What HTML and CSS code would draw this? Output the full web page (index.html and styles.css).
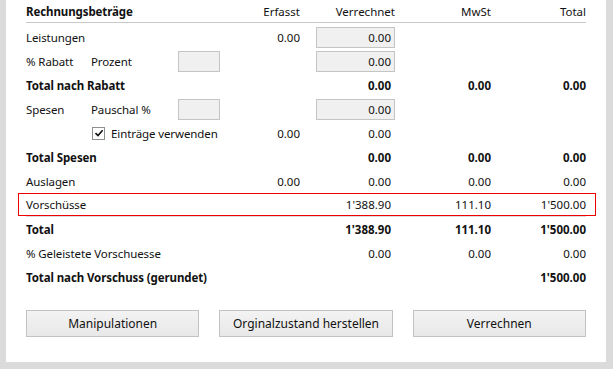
FILE: index.html
```html
<!DOCTYPE html>
<html lang="de">
<head>
  <meta charset="UTF-8">
  <title>Rechnungsbeträge</title>
  <link rel="stylesheet" href="styles.css">
</head>
<body>
  <div class="panel">
    <div class="row head">
      <span class="label bold">Rechnungsbeträge</span>
      <span class="num">Erfasst</span>
      <span class="num verr-head">Verrechnet</span>
      <span class="num">MwSt</span>
      <span class="num">Total</span>
    </div>

    <div class="row">
      <span class="label">Leistungen</span>
      <span class="num">0.00</span>
      <span class="cell-box"><span class="box">0.00</span></span>
      <span></span>
      <span></span>
    </div>

    <div class="row">
      <span class="label">
        <span class="sub1">% Rabatt</span>
        <span class="sub2">Prozent</span>
        <span class="small-box"></span>
      </span>
      <span></span>
      <span class="cell-box"><span class="box">0.00</span></span>
      <span></span>
      <span></span>
    </div>

    <div class="row bold">
      <span class="label">Total nach Rabatt</span>
      <span></span>
      <span class="num verr">0.00</span>
      <span class="num">0.00</span>
      <span class="num">0.00</span>
    </div>

    <div class="row">
      <span class="label">
        <span class="sub1">Spesen</span>
        <span class="sub2">Pauschal %</span>
        <span class="small-box"></span>
      </span>
      <span></span>
      <span class="cell-box"><span class="box">0.00</span></span>
      <span></span>
      <span></span>
    </div>

    <div class="row">
      <span class="label check-label">
        <span class="checkbox">
          <svg width="10" height="10" viewBox="0 0 10 10"><path d="M1.5 5.2 L4 7.6 L8.6 2.2" fill="none" stroke="#111" stroke-width="1.6"/></svg>
        </span>
        Einträge verwenden
      </span>
      <span class="num">0.00</span>
      <span class="num verr">0.00</span>
      <span></span>
      <span></span>
    </div>

    <div class="row bold">
      <span class="label">Total Spesen</span>
      <span></span>
      <span class="num verr">0.00</span>
      <span class="num">0.00</span>
      <span class="num">0.00</span>
    </div>

    <div class="row">
      <span class="label">Auslagen</span>
      <span class="num">0.00</span>
      <span class="num verr">0.00</span>
      <span class="num">0.00</span>
      <span class="num">0.00</span>
    </div>

    <div class="row marked">
      <span class="label">Vorschüsse</span>
      <span></span>
      <span class="num verr">1'388.90</span>
      <span class="num">111.10</span>
      <span class="num">1'500.00</span>
    </div>

    <div class="row bold">
      <span class="label">Total</span>
      <span></span>
      <span class="num verr">1'388.90</span>
      <span class="num">111.10</span>
      <span class="num">1'500.00</span>
    </div>

    <div class="row">
      <span class="label">% Geleistete Vorschuesse</span>
      <span></span>
      <span class="num verr">0.00</span>
      <span class="num">0.00</span>
      <span class="num">0.00</span>
    </div>

    <div class="row bold">
      <span class="label">Total nach Vorschuss (gerundet)</span>
      <span></span>
      <span></span>
      <span></span>
      <span class="num">1'500.00</span>
    </div>

    <div class="buttons">
      <button>Manipulationen</button>
      <button>Orginalzustand herstellen</button>
      <button>Verrechnen</button>
    </div>
  </div>
</body>
</html>
```

FILE: styles.css
```css
body {
  margin: 0;
  background: #dbdbdb;
  font-family: "Noto Sans", "Open Sans", sans-serif;
  font-size: 11.5px;
  color: #111;
}
.panel {
  margin-left: 6px;
  width: 560px;
  height: 362px;
  padding: 0 20px;
  background: white;
}
.row {
  display: grid;
  grid-template-columns: 200px 74px 95px 96px 95px;
  align-items: center;
  height: 24px;
  white-space: nowrap;
}
.row.head {
  height: 22px;
  border-bottom: 1px solid #c9c9c9;
  margin-bottom: 2px;
}
.bold {
  font-weight: bold;
}
.label {
  display: flex;
  align-items: center;
  letter-spacing: -0.1px;
}
.sub1 {
  width: 65px;
}
.sub2 {
  width: 87px;
}
.num {
  text-align: right;
}
.verr {
  padding-right: 4px;
}
.verr-head {
  padding-right: 0;
}
.cell-box {
  display: flex;
  justify-content: flex-end;
}
.box {
  box-sizing: border-box;
  width: 79px;
  height: 21px;
  line-height: 19px;
  padding-right: 3px;
  text-align: right;
  background: #f0f0f0;
  border: 1px solid #c4c4c4;
}
.small-box {
  box-sizing: border-box;
  width: 42px;
  height: 21px;
  background: #f0f0f0;
  border: 1px solid #c4c4c4;
}
.check-label {
  padding-left: 66px;
}
.checkbox {
  box-sizing: border-box;
  width: 13px;
  height: 13px;
  margin-right: 6px;
  border: 1px solid #8f8f8f;
  background: white;
  display: flex;
  align-items: center;
  justify-content: center;
}
.marked {
  position: relative;
  border-bottom: 1px solid #dcdcdc;
  height: 23px;
}
.marked::after {
  content: "";
  position: absolute;
  left: -8px;
  right: -10px;
  top: 0;
  bottom: 0;
  border: 1px solid #ee0000;
}
.buttons {
  display: grid;
  grid-template-columns: 1fr 1fr 1fr;
  gap: 20px;
  margin-top: 21px;
}
.buttons button {
  height: 27px;
  font-family: inherit;
  font-size: 12px;
  color: #111;
  background: linear-gradient(#f3f3f3, #e8e8e8);
  border: 1px solid #c2c2c2;
}
```
